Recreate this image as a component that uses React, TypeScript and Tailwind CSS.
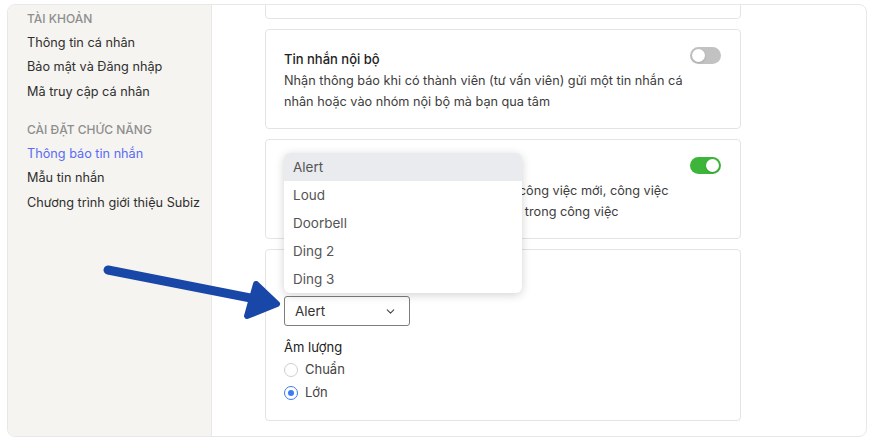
import { ChevronDown } from 'lucide-react';

const font = { fontFamily: 'Inter, "Noto Sans", sans-serif' };

const Toggle = ({ on }: { on?: boolean }) => (
  <div
    className={`relative h-[17px] w-[31px] shrink-0 rounded-full ${on ? 'bg-[#3db53a]' : 'bg-[#c2c2c2]'}`}
  >
    <div
      className={`absolute top-[2px] h-[13px] w-[13px] rounded-full bg-white shadow-sm ${on ? 'right-[2px]' : 'left-[2px]'}`}
    />
  </div>
);

const SettingCard = ({ title, lines, on }: { title: string; lines: string[]; on?: boolean }) => (
  <div className="flex items-start justify-between rounded-[4px] border border-[#e4e4e4] bg-white px-[18px] pb-[16px] pt-[17px]">
    <div className="pt-[1px]">
      <div className="text-[13px] font-medium leading-[22px] text-[#222]">{title}</div>
      <div className="text-[12.7px] leading-[21px] text-[#3d3d3d]">
        {lines.map((l) => (
          <div key={l} className="whitespace-pre">{l}</div>
        ))}
      </div>
    </div>
    <div className="ml-auto mr-[1px]">
      <Toggle on={on} />
    </div>
  </div>
);

const sounds = ['Alert', 'Loud', 'Doorbell', 'Ding 2', 'Ding 3'];

const Radio = ({ checked, label }: { checked?: boolean; label: string }) => (
  <label className="flex h-[23px] items-center gap-[7px] text-[13px] text-[#444]">
    <span
      className={`flex h-[14px] w-[14px] items-center justify-center rounded-full border ${checked ? 'border-[#3d7bf2]' : 'border-[#cfcfcf]'}`}
    >
      {checked && <span className="h-[6px] w-[6px] rounded-full bg-[#3d7bf2]" />}
    </span>
    {label}
  </label>
);

export default function App() {
  return (
    <div className="relative h-[440px] w-[876px] overflow-hidden bg-white pl-[7px] pr-[9px] pt-[4px] pb-[3px]" style={font}>
      <div className="flex h-full overflow-hidden rounded-[8px] border border-[#e8e8e8]">
        {/* Sidebar */}
        <aside className="w-[204px] shrink-0 border-r border-[#ebe9e4] bg-[#f5f4f0] pl-[19px] pt-[3px]">
          <div className="flex h-[22px] items-center text-[12px] font-medium text-[#8e8e8e]">TÀI KHOẢN</div>
          <div className="text-[12.7px] text-[#2f2f2f]">
            <div className="flex h-[24.5px] items-center">Thông tin cá nhân</div>
            <div className="flex h-[24.5px] items-center">Bảo mật và Đăng nhập</div>
            <div className="flex h-[24.5px] items-center">Mã truy cập cá nhân</div>
          </div>
          <div className="mt-[15.5px] flex h-[22px] items-center text-[12px] font-medium text-[#8e8e8e]">CÀI ĐẶT CHỨC NĂNG</div>
          <div className="text-[12.7px] text-[#2f2f2f]">
            <div className="flex h-[24.5px] items-center text-[#5a6cf6]">Thông báo tin nhắn</div>
            <div className="flex h-[24.5px] items-center">Mẫu tin nhắn</div>
            <div className="flex h-[24.5px] items-center">Chương trình giới thiệu Subiz</div>
          </div>
        </aside>

        {/* Main */}
        <main className="flex-1 overflow-hidden pl-[53px]">
          <div className="flex w-[476px] flex-col gap-[10px]">
            <div className="-mt-[86px] h-[100px] rounded-[4px] border border-[#e4e4e4] bg-white" />
            <SettingCard
              title="Tin nhắn nội bộ"
              lines={[
                'Nhận thông báo khi có thành viên (tư vấn viên) gửi một tin nhắn cá',
                'nhân hoặc vào nhóm nội bộ mà bạn qua tâm',
              ]}
            />
            <SettingCard
              title="Công việc"
              on
              lines={[
                'Nhận thông báo khi có người giao bạn  công việc mới, công việc',
                'sắp hết hạn hoặc khi có bình luận mới ở trong công việc',
              ]}
            />
            <div className="rounded-[4px] border border-[#e4e4e4] bg-white px-[18px] pb-[16px] pt-[18px]">
              <div className="text-[13px] font-medium leading-[22px] text-[#222]">Âm thanh thông báo</div>
              <div className="relative mt-[6px] w-[126px]">
                <div className="absolute bottom-full left-0 z-10 mb-[3px] w-[238px] overflow-hidden rounded-[6px] bg-white shadow-[0_2px_10px_rgba(0,0,0,0.18)]">
                  {sounds.map((s, i) => (
                    <div
                      key={s}
                      className={`flex h-[28px] items-center px-[9px] text-[13.5px] text-[#555] ${i === 0 ? 'bg-[#e9ebee]' : ''}`}
                    >
                      {s}
                    </div>
                  ))}
                </div>
                <div className="flex h-[30px] items-center justify-between rounded-[3px] border border-[#7d7d7d] pl-[10px] pr-[12px] text-[13.5px] text-[#333]">
                  Alert
                  <ChevronDown size={13} strokeWidth={2} className="text-[#444]" />
                </div>
              </div>
              <div className="mt-[10px] text-[13px] leading-[22px] text-[#222]">Âm lượng</div>
              <Radio label="Chuẩn" />
              <Radio label="Lớn" checked />
            </div>
          </div>
        </main>
      </div>

      {/* Annotation arrow */}
      <svg className="pointer-events-none absolute left-0 top-0" width="876" height="440" viewBox="0 0 876 440">
        <line x1="108" y1="270" x2="256" y2="299" stroke="#1947a8" strokeWidth="9" strokeLinecap="round" />
        <polygon
          points="256,284 277,304 247,316"
          fill="#1947a8"
          stroke="#1947a8"
          strokeWidth="6"
          strokeLinejoin="round"
        />
      </svg>
    </div>
  );
}
